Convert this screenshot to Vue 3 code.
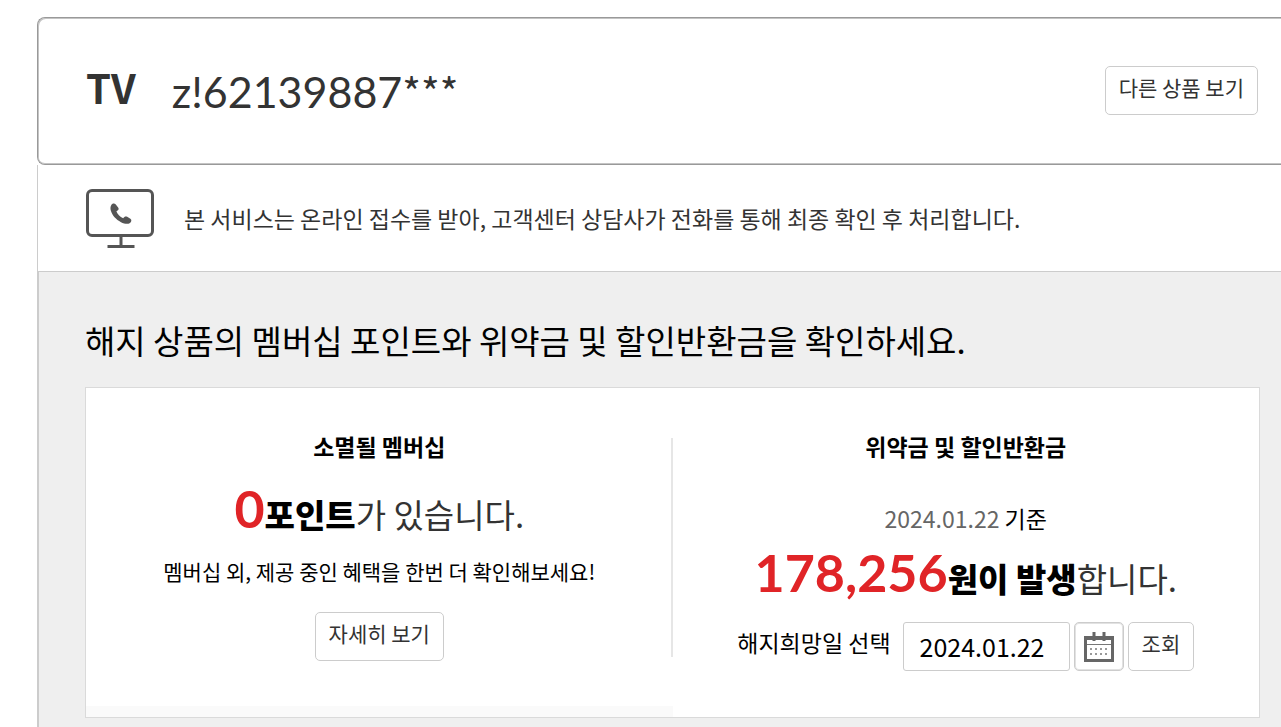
<script setup>
import { ref } from 'vue'

const account = 'z!62139887'
const baseDate = '2024.01.22'
const hopeDate = ref(baseDate)
const dotXs = [7, 12, 17, 22]
const dotYs = [17, 22]
</script>

<template>
  <main class="page">
    <header class="product">
      <h1 class="kind">TV</h1>
      <p class="account">{{ account }}<span class="mask">***</span></p>
      <button type="button" class="btn other">다른 상품 보기</button>
    </header>

    <section class="notice">
      <svg class="monitor" viewBox="0 0 68 60" aria-hidden="true">
        <rect x="1.5" y="2.5" width="65" height="45" rx="4.5" fill="none" stroke="#555" stroke-width="3" />
        <path d="M35 48v9" stroke="#555" stroke-width="3" />
        <path d="M21.500 58.500h27" stroke="#555" stroke-width="3" />
        <path
          d="M25.200 17.200C26 15.300 28.500 14.800 29.800 16.500L32.300 19.800C33.200 21.300 32.300 22.300 30.400 23.200C31.200 26 34 28.900 37.200 30.200C38.300 28.600 39.600 28 41.200 28.800L44.400 30.800C46 32 45.500 34.300 43.600 35.300C41.500 36.400 38 35.700 35 34.200C30 31.600 26.200 27.600 24.800 22.600C24.200 20.400 24.500 18.500 25.200 17.200Z"
          fill="#555"
        />
      </svg>
      <p>본 서비스는 온라인 접수를 받아, 고객센터 상담사가 전화를 통해 최종 확인 후 처리합니다.</p>
    </section>

    <section class="summary">
      <h2>해지 상품의 멤버십 포인트와 위약금 및 할인반환금을 확인하세요.</h2>
      <div class="card">
        <div class="col membership">
          <h3>소멸될 멤버십</h3>
          <p class="amount points"><em>0</em><strong>포인트</strong>가 있습니다.</p>
          <p class="desc">멤버십 외, 제공 중인 혜택을 한번 더 확인해보세요!</p>
          <button type="button" class="btn">자세히 보기</button>
        </div>
        <div class="divider"></div>
        <div class="col penalty">
          <h3>위약금 및 할인반환금</h3>
          <p class="base"><span>{{ baseDate }}</span> 기준</p>
          <p class="amount total"><em>178,256</em><strong>원이 발생</strong>합니다.</p>
          <form class="lookup" @submit.prevent>
            <label for="hope-date">해지희망일 선택</label>
            <input id="hope-date" v-model="hopeDate" type="text" />
            <button type="button" class="btn calendar" aria-label="달력">
              <svg viewBox="0 0 30 30" aria-hidden="true">
                <path d="M1.500 5v23.500h27V5" fill="none" stroke="#666" stroke-width="3" />
                <path d="M0 4h30v4H0z" fill="#666" />
                <path d="M3 12.500h24" stroke="#777" stroke-width="1" />
                <path d="M8.500 0h3v9h-3zM18.500 0h3v9h-3z" fill="#666" />
                <template v-for="y in dotYs" :key="y">
                  <rect v-for="x in dotXs" :key="x" :x="x - 1" :y="y - 1" width="2" height="2" fill="#999" />
                </template>
              </svg>
            </button>
            <button type="submit" class="btn">조회</button>
          </form>
        </div>
      </div>
    </section>
  </main>
</template>

<style>
body {
  margin: 0;
  background: #fff;
}
</style>

<style scoped>
* {
  box-sizing: border-box;
}

h1,
h2,
h3,
p {
  margin: 0;
}

.page {
  display: flex;
  flex-direction: column;
  min-height: 100vh;
  padding: 17px 0 0 37px;
  font-family: "Noto Sans CJK KR", "Noto Sans", sans-serif;
  color: #000;
}

.product {
  display: flex;
  align-items: flex-start;
  padding: 48px 23px 48px 48px;
  border: 1px solid #999;
  border-right: 0;
  border-radius: 8px 0 0 8px;
  box-shadow: inset 1px 1px 0 #c4c4c4, inset 0 -1px 0 #c4c4c4;
  color: #333;
}

.kind {
  font-size: 40px;
  font-weight: 700;
  line-height: 42px;
}

.account {
  margin-left: 36px;
  font-family: Lato, sans-serif;
  font-size: 43px;
  line-height: 52px;
}

.product .account {
  margin-bottom: -2px;
}

.mask {
  font-family: "Noto Sans CJK KR", sans-serif;
  font-size: 40px;
  line-height: 0;
}

.btn {
  height: 49px;
  padding: 0 13px 8px;
  border: 1px solid #ccc;
  border-radius: 5px;
  background: #fff;
  color: #333;
  font-family: inherit;
  font-size: 21px;
  line-height: 30px;
  white-space: nowrap;
}

.other {
  margin-left: auto;
}

.notice {
  display: flex;
  align-items: center;
  gap: 30px;
  padding: 23px 23px 23px 48px;
  border-left: 1px solid #ccc;
  border-bottom: 1px solid #ccc;
  color: #333;
  font-size: 23px;
  line-height: 34px;
}

.monitor {
  flex: none;
  width: 68px;
  height: 60px;
}

.summary {
  flex: 1;
  padding: 44px 21px 9px 46px;
  border-left: 2px solid #ccc;
  background: #efefef;
}

h2 {
  font-size: 33px;
  font-weight: 400;
  line-height: 48px;
}

.card {
  display: grid;
  grid-template-columns: 1fr 1fr;
  margin-top: 23px;
  border: 1px solid #dadada;
  background: #fff;
}

.col {
  display: flex;
  flex-direction: column;
  align-items: center;
  padding-top: 41px;
}

.membership {
  grid-area: 1 / 1;
  border-bottom: 11px solid #fafafa;
}

.penalty {
  grid-area: 1 / 2;
  padding-bottom: 46px;
}

.divider {
  grid-area: 1 / 1;
  justify-self: end;
  width: 2px;
  margin: 50px 0 60px;
  background: #e6e6e6;
}

h3 {
  font-size: 23px;
  font-weight: 700;
  line-height: 34px;
}

.amount {
  color: #333;
  font-size: 33px;
  line-height: 60px;
  white-space: nowrap;
}

.amount em {
  color: #e02427;
  font-family: Lato, sans-serif;
  font-size: 52px;
  font-style: normal;
  font-weight: 700;
}

.amount strong {
  color: #000;
  font-weight: 900;
}

.points {
  margin-top: 15px;
}

.total {
  margin-top: 7px;
}

.desc {
  margin: 11px 0 25px;
  font-size: 21px;
  line-height: 32px;
}

.base {
  margin-top: 38px;
  font-size: 23px;
  line-height: 34px;
}

.base span {
  color: #666;
}

.lookup {
  display: flex;
  gap: 4px;
  margin-top: 14px;
}

.lookup label {
  margin-right: 8px;
  font-size: 23px;
  line-height: 40px;
}

.lookup input {
  width: 167px;
  height: 49px;
  padding: 0 16px 2px;
  border: 1px solid #ccc;
  border-radius: 3px;
  background: #fff;
  color: #000;
  font-family: inherit;
  font-size: 25px;
}

.calendar {
  display: flex;
  align-items: center;
  justify-content: center;
  width: 50px;
  padding: 0;
  box-shadow: inset 0 0 0 1px #e2e2e2;
}

.calendar svg {
  width: 30px;
  height: 30px;
}
</style>
